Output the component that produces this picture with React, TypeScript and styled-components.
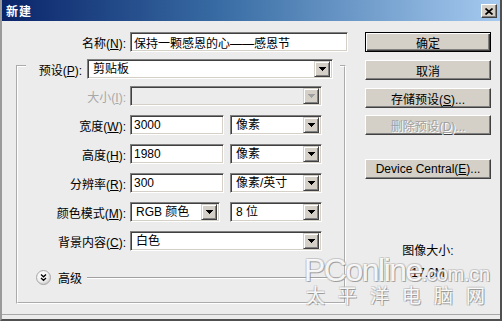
import React from "react";
import styled, { createGlobalStyle, css } from "styled-components";

const FONT = `"Liberation Sans", "Noto Sans CJK SC", sans-serif`;

const GlobalStyle = createGlobalStyle`
  html, body { margin: 0; padding: 0; background: #ececec; }
  body { font-family: ${FONT}; font-size: 12px; color: #000; }
  * { box-sizing: border-box; }
`;

const raised = css`
  background: #d4d0c8;
  border: 1px solid;
  border-color: #ffffff #404040 #404040 #ffffff;
  box-shadow: inset -1px -1px #808080;
`;

const sunken = css`
  border: 1px solid;
  border-color: #808080 #ffffff #ffffff #808080;
  box-shadow: inset 1px 1px #404040, inset -1px -1px #d4d0c8;
`;

const Window = styled.div`
  position: relative;
  width: 502px;
  height: 321px;
  background: #ececec;
  border-left: 2px solid #9a9a9a;
  border-right: 2px solid #505050;
  border-bottom: 2px solid #505050;
  padding-bottom: 4px;
  display: flex;
  flex-direction: column;
  overflow: hidden;
`;

const TitleBar = styled.div`
  height: 21px;
  flex: none;
  display: flex;
  align-items: center;
  justify-content: space-between;
  padding: 0 3px 0 4px;
  background: linear-gradient(to right, #0a246a 0%, #3a6ea5 45%, #a6caf0 100%);
`;

const Title = styled.span`
  color: #fff;
  font-weight: bold;
  font-size: 12px;
  letter-spacing: 1px;
`;

const CloseButton = styled.div`
  ${raised};
  width: 16px;
  height: 14px;
  display: flex;
  align-items: center;
  justify-content: center;
  margin-top: 1px;
`;

const Body = styled.div`
  flex: 1;
  display: flex;
  gap: 17px;
  padding: 11px 11px 0 14px;
  border-bottom: 1px solid #a8a8a8;
`;

const FormCol = styled.div`
  display: flex;
  flex-direction: column;
`;

const NameRow = styled.div`
  display: flex;
  align-items: center;
  height: 20px;
`;

const Label = styled.label<{ $w: number; $disabled?: boolean }>`
  width: ${(p) => p.$w}px;
  flex: none;
  text-align: right;
  white-space: nowrap;
  font-size: 12px;
  color: ${(p) => (p.$disabled ? "#a8a8a8" : "#000")};
  margin-right: 4px;
  u { text-decoration: underline; }
`;

const TextInput = styled.input<{ $w: number }>`
  ${sunken};
  width: ${(p) => p.$w}px;
  height: 20px;
  flex: none;
  margin: 0;
  padding: 0 0 0 3px;
  background: #fff;
  font: 12px ${FONT};
  color: #000;
  outline: none;
`;

const SelectBox = styled.div<{ $w: number; $disabled?: boolean; $ml?: number }>`
  ${sunken};
  width: ${(p) => p.$w}px;
  height: 20px;
  flex: none;
  margin-left: ${(p) => p.$ml ?? 0}px;
  display: flex;
  align-items: center;
  padding: 2px;
  background: ${(p) => (p.$disabled ? "#ececec" : "#fff")};
`;

const SelectValue = styled.span`
  flex: 1;
  padding-left: 3px;
  font-size: 12px;
  line-height: 16px;
  white-space: nowrap;
  overflow: hidden;
`;

const ArrowButton = styled.span`
  width: 16px;
  height: 16px;
  flex: none;
  background: #d4d0c8;
  border: 1px solid;
  border-color: #d4d0c8 #404040 #404040 #d4d0c8;
  box-shadow: inset 1px 1px #fff, inset -1px -1px #808080;
  display: flex;
  align-items: center;
  justify-content: center;
`;

const Group = styled.fieldset`
  width: 330px;
  margin: 1px 0 0 0;
  padding: 7px 0 17px 0;
  border: 2px groove #ffffff;
  min-width: 0;
`;

const Legend = styled.legend`
  margin-left: 8px;
  padding: 6px 7px 0 0;
  display: flex;
  align-items: center;
`;

const Rows = styled.div`
  display: flex;
  flex-direction: column;
  gap: 9px;
`;

const Row = styled.div`
  display: flex;
  align-items: center;
  height: 20px;
`;

const AdvancedRow = styled.div`
  display: flex;
  align-items: center;
  margin-top: 19px;
  padding-left: 18px;
  height: 15px;
`;

const AdvancedText = styled.span`
  margin-left: 7px;
  font-size: 12px;
`;

const Rule = styled.div`
  flex: 1;
  margin: 0 -1px 0 5px;
  border-top: 1px solid #a0a0a0;
  border-bottom: 1px solid #ffffff;
`;

const ButtonCol = styled.div`
  width: 126px;
  display: flex;
  flex-direction: column;
  align-items: center;
`;

const Button = styled.button<{ $primary?: boolean; $mt?: number }>`
  ${raised};
  width: 126px;
  height: 20px;
  margin: ${(p) => p.$mt ?? 0}px 0 0;
  padding: 0;
  font: 12px ${FONT};
  color: #000;
  ${(p) =>
    p.$primary &&
    css`
      border: 1px solid #000;
      box-shadow: inset 1px 1px #fff, inset -1px -1px #404040, inset -2px -2px #808080;
    `}
  &:disabled {
    color: #a0a0a0;
    text-shadow: 1px 1px #fff;
  }
  u { text-decoration: underline; }
`;

const InfoText = styled.div<{ $mt: number }>`
  margin-top: ${(p) => p.$mt}px;
  font-size: 12px;
  line-height: 14px;
  text-align: center;
`;

const Watermark = styled.div`
  position: absolute;
  left: 302px;
  top: 253px;
  width: 196px;
  display: flex;
  flex-direction: column;
  align-items: flex-start;
  pointer-events: none;
  white-space: nowrap;
  color: rgba(255, 255, 255, 0.92);
  text-shadow: 1px 1px 0 rgba(110, 110, 110, 0.55), -1px -1px 0 rgba(190, 190, 190, 0.5),
    1px -1px 0 rgba(170, 170, 170, 0.45), -1px 1px 0 rgba(170, 170, 170, 0.45);
  font-family: "Liberation Sans", sans-serif;
`;

const MarkLine = styled.div`
  line-height: 34px;
  height: 34px;
`;

const MarkBig = styled.span`
  font-size: 32px;
  letter-spacing: -1.5px;
`;

const MarkSmall = styled.span`
  font-size: 20px;
  letter-spacing: -0.3px;
`;

const MarkCn = styled.div`
  font-family: "Noto Sans CJK SC", sans-serif;
  font-size: 19px;
  line-height: 22px;
  letter-spacing: 13px;
  margin-top: -3px;
  margin-left: 2px;
`;

const Arrow = ({ disabled }: { disabled?: boolean }) => (
  <svg width="7" height="4" viewBox="0 0 7 4" shapeRendering="crispEdges">
    <path d="M0 0H7L3.5 4Z" fill={disabled ? "#a0a0a0" : "#000"} />
  </svg>
);

const Select = ({
  w,
  value,
  disabled,
  ml,
}: {
  w: number;
  value?: string;
  disabled?: boolean;
  ml?: number;
}) => (
  <SelectBox $w={w} $disabled={disabled} $ml={ml}>
    <SelectValue>{value}</SelectValue>
    <ArrowButton>
      <Arrow disabled={disabled} />
    </ArrowButton>
  </SelectBox>
);

const CloseGlyph = () => (
  <svg width="8" height="7" viewBox="0 0 8 7">
    <path d="M0.5 0.5L7.5 6.5M7.5 0.5L0.5 6.5" stroke="#000" strokeWidth="1.7" />
  </svg>
);

const AdvancedIcon = () => (
  <svg width="15" height="15" viewBox="0 0 15 15">
    <defs>
      <radialGradient id="advg" cx="0.4" cy="0.35" r="0.7">
        <stop offset="0" stopColor="#ffffff" />
        <stop offset="0.6" stopColor="#f0f0f0" />
        <stop offset="1" stopColor="#c4c4c4" />
      </radialGradient>
    </defs>
    <circle cx="7.5" cy="7.5" r="7" fill="url(#advg)" stroke="#a8a8a8" strokeWidth="1" />
    <path d="M5 4.5L7.5 6.8L10 4.5M5 8L7.5 10.3L10 8" fill="none" stroke="#000" strokeWidth="1.3" />
  </svg>
);

export default function App() {
  return (
    <>
      <GlobalStyle />
      <Window>
        <TitleBar>
          <Title>新建</Title>
          <CloseButton>
            <CloseGlyph />
          </CloseButton>
        </TitleBar>
        <Body>
          <FormCol>
            <NameRow>
              <Label $w={110}>
                名称(<u>N</u>):
              </Label>
              <TextInput $w={218} defaultValue="保持一颗感恩的心——感恩节" />
            </NameRow>
            <Group>
              <Legend>
                <Label $w={56}>
                  预设(<u>P</u>):
                </Label>
                <Select w={246} value="剪贴板" ml={1} />
              </Legend>
              <Rows>
                <Row>
                  <Label $w={108} $disabled>
                    大小(<u>I</u>):
                  </Label>
                  <Select w={192} disabled />
                </Row>
                <Row>
                  <Label $w={108}>
                    宽度(<u>W</u>):
                  </Label>
                  <TextInput $w={94} defaultValue="3000" />
                  <Select w={92} value="像素" ml={6} />
                </Row>
                <Row>
                  <Label $w={108}>
                    高度(<u>H</u>):
                  </Label>
                  <TextInput $w={94} defaultValue="1980" />
                  <Select w={92} value="像素" ml={6} />
                </Row>
                <Row>
                  <Label $w={108}>
                    分辨率(<u>R</u>):
                  </Label>
                  <TextInput $w={94} defaultValue="300" />
                  <Select w={92} value="像素/英寸" ml={6} />
                </Row>
                <Row>
                  <Label $w={108}>
                    颜色模式(<u>M</u>):
                  </Label>
                  <Select w={90} value="RGB 颜色" />
                  <Select w={92} value="8 位" ml={10} />
                </Row>
                <Row>
                  <Label $w={108}>
                    背景内容(<u>C</u>):
                  </Label>
                  <Select w={192} value="白色" />
                </Row>
              </Rows>
              <AdvancedRow>
                <AdvancedIcon />
                <AdvancedText>高级</AdvancedText>
                <Rule />
              </AdvancedRow>
            </Group>
          </FormCol>
          <ButtonCol>
            <Button $primary>确定</Button>
            <Button $mt={8}>取消</Button>
            <Button $mt={8}>
              存储预设(<u>S</u>)...
            </Button>
            <Button $mt={7} disabled>
              删除预设(<u>D</u>)...
            </Button>
            <Button $mt={24}>
              Device Central(<u>E</u>)...
            </Button>
            <InfoText $mt={65}>图像大小:</InfoText>
            <InfoText $mt={8}>17.0M</InfoText>
          </ButtonCol>
        </Body>
        <Watermark>
          <MarkLine>
            <MarkBig>PConline</MarkBig>
            <MarkSmall>.com.cn</MarkSmall>
          </MarkLine>
          <MarkCn>太平洋电脑网</MarkCn>
        </Watermark>
      </Window>
    </>
  );
}
